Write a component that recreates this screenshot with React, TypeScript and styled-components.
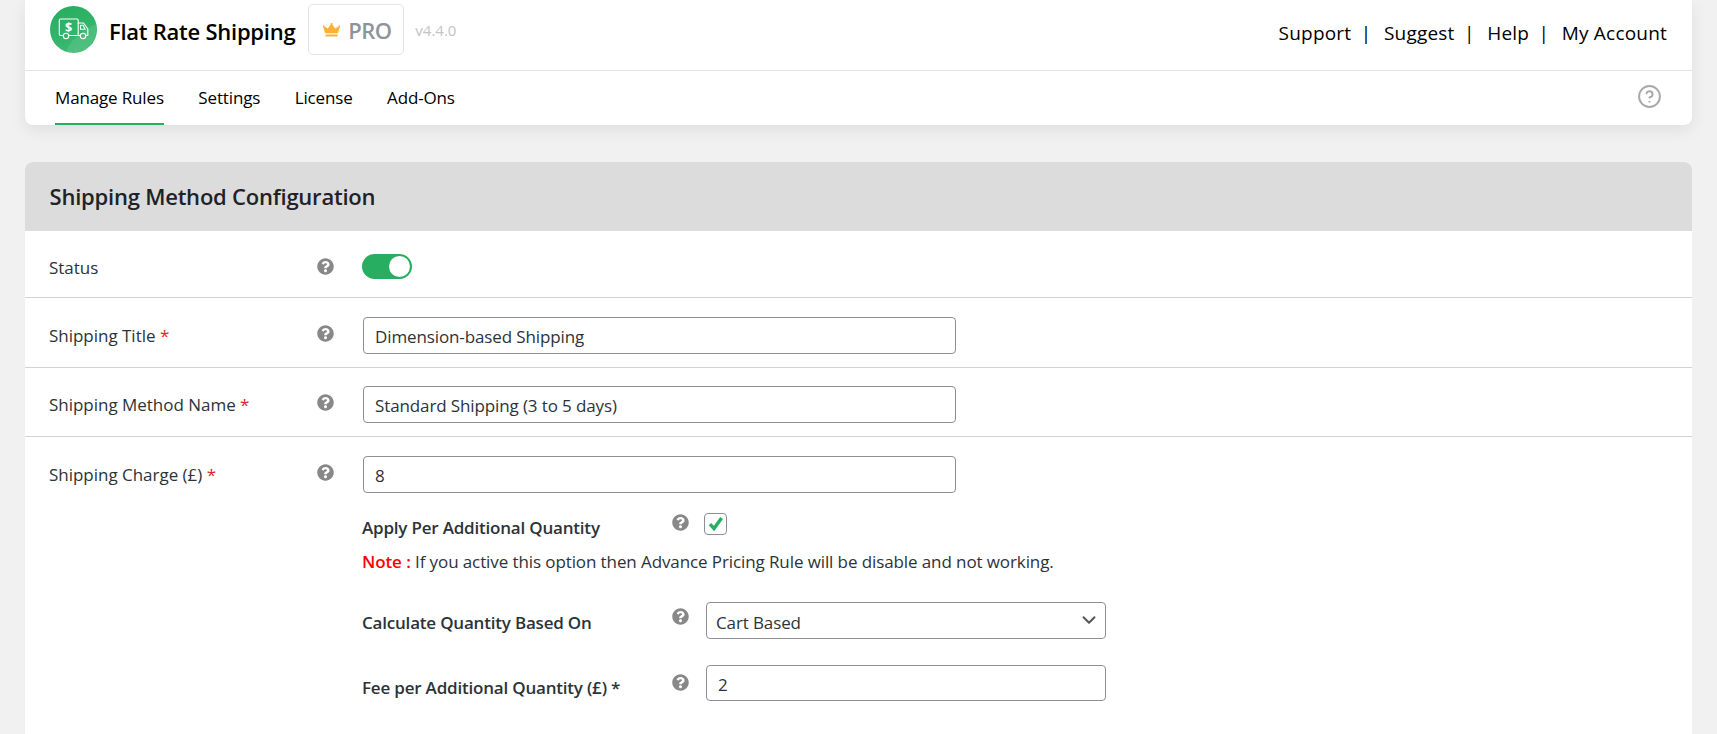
import React from "react";
import styled, { createGlobalStyle } from "styled-components";
import { FaQuestionCircle } from "react-icons/fa";
import { CircleHelp, ChevronDown } from "lucide-react";

const Global = createGlobalStyle`
  html, body { margin: 0; padding: 0; height: 100%; overflow: hidden; background: #f1f1f1; }
  body { font-family: "Open Sans", "Noto Sans", sans-serif; color: #2c3338; }
  * { box-sizing: border-box; }
`;

const Page = styled.div`
  padding: 0 25px;
  height: 734px;
  overflow: hidden;
`;

const HeaderCard = styled.header`
  background: #fff;
  border-radius: 0 0 8px 8px;
  box-shadow: 0 5px 16px rgba(0, 0, 0, 0.08);
  height: 125px;
`;

const TopBar = styled.div`
  display: flex;
  align-items: center;
  justify-content: space-between;
  height: 71px;
  padding: 0 25px;
  border-bottom: 1px solid #e4e4e4;
`;

const Brand = styled.div`
  display: flex;
  align-items: center;
  margin-top: -11px;
`;

const BrandName = styled.span`
  font-size: 22px;
  font-weight: 600;
  color: #000;
  margin: 2px 13px 0 12px;
  letter-spacing: -0.25px;
`;

const ProBadge = styled.div`
  display: flex;
  align-items: center;
  gap: 8px;
  width: 96px;
  height: 51px;
  padding-left: 14px;
  border: 1px solid #e5e5e5;
  border-radius: 5px;
`;

const ProText = styled.span`
  font-size: 22px;
  font-weight: 600;
  color: #8f939a;
  letter-spacing: -0.6px;
`;

const Version = styled.span`
  font-size: 15px;
  color: #c3c4c7;
  margin-left: 11px;
`;

const TopLinks = styled.nav`
  display: flex;
  align-items: center;
  margin-top: -4px;
  font-size: 19px;
  color: #000;
  letter-spacing: 0.2px;
`;

const TopLink = styled.a`
  color: #000;
`;

const Pipe = styled.span`
  margin: 0 12.5px 0 9.5px;
`;

const TabBar = styled.div`
  display: flex;
  align-items: stretch;
  justify-content: space-between;
  height: 54px;
  padding: 0 30px;
`;

const Tabs = styled.div`
  display: flex;
  gap: 34.5px;
`;

const Tab = styled.a<{ $active?: boolean }>`
  display: flex;
  align-items: center;
  font-size: 17px;
  color: #000;
  letter-spacing: -0.15px;
  padding-top: 1px;
  border-bottom: 2px solid ${(p) => (p.$active ? "#27ae60" : "transparent")};
`;

const TabHelp = styled.div`
  display: flex;
  align-items: center;
  color: #a9a9a9;
  padding-bottom: 3px;
`;

const ConfigCard = styled.section`
  margin-top: 37px;
  background: #fff;
  border-radius: 8px 8px 0 0;
  overflow: hidden;
`;

const CardTitle = styled.h2`
  margin: 0;
  height: 69px;
  padding: 0 25px 2px 24.5px;
  display: flex;
  align-items: center;
  background: #dcdcdc;
  font-size: 22px;
  font-weight: 600;
  color: #1d2327;
  letter-spacing: -0.22px;
`;

const Row = styled.div<{ $top: number; $height?: number }>`
  display: grid;
  grid-template-columns: 267px 46px 1fr;
  align-items: start;
  padding: ${(p) => p.$top}px 25px 0;
  ${(p) => (p.$height ? `height: ${p.$height}px;` : "")}
  & + & {
    border-top: 1px solid #d2d2d2;
  }
`;

const Label = styled.label<{ $offset?: number }>`
  font-size: 17px;
  line-height: 22px;
  color: #2c3338;
  letter-spacing: -0.02px;
  margin: ${(p) => p.$offset ?? 8}px 0 0 -1px;
`;

const Required = styled.span`
  color: #e8212b;
`;

const HelpSlot = styled.span<{ $offset?: number }>`
  display: block;
  height: 17px;
  color: #888;
  margin: ${(p) => p.$offset ?? 8}px 0 0 -0.5px;
  & > svg {
    display: block;
  }
`;

const Toggle = styled.span`
  display: block;
  position: relative;
  width: 50px;
  height: 25px;
  margin-left: -1px;
  border-radius: 13px;
  background: #27ae60;
  &::after {
    content: "";
    position: absolute;
    top: 2px;
    right: 2px;
    width: 21px;
    height: 21px;
    border-radius: 50%;
    background: #fff;
  }
`;

const TextInput = styled.input<{ $w?: number; $h?: number }>`
  display: block;
  width: ${(p) => p.$w ?? 593}px;
  height: ${(p) => p.$h ?? 37}px;
  padding: 2px 11px 0;
  border: 1px solid #8c8f94;
  border-radius: 4px;
  background: #fff;
  font: inherit;
  font-size: 17px;
  color: #2c3338;
  letter-spacing: -0.12px;
  outline: none;
`;

const Controls = styled.div`
  display: flex;
  flex-direction: column;
`;

const SubRow = styled.div<{ $top: number }>`
  display: grid;
  grid-template-columns: 310px 34px 1fr;
  align-items: start;
  margin: ${(p) => p.$top}px 0 0 -1px;
`;

const SubLabel = styled.label<{ $offset: number }>`
  font-size: 17px;
  line-height: 22px;
  font-weight: 600;
  color: #2c3338;
  letter-spacing: -0.2px;
  margin-top: ${(p) => p.$offset}px;
`;

const CheckBox = styled.span`
  display: flex;
  align-items: center;
  justify-content: center;
  width: 23px;
  height: 22px;
  margin-left: -2px;
  border: 1px solid #8c8f94;
  border-radius: 4px;
  & > svg {
    display: block;
  }
`;

const Note = styled.p`
  margin: 12px 0 0 -1px;
  font-size: 17px;
  line-height: 22px;
  color: #2c3338;
  letter-spacing: -0.1px;
`;

const NoteLead = styled.strong`
  color: #ff0000;
  font-weight: 600;
`;

const SelectBox = styled.div`
  position: relative;
  width: 400px;
  height: 37px;
`;

const Select = styled.select`
  appearance: none;
  display: block;
  width: 100%;
  height: 100%;
  padding: 3px 30px 0 9px;
  border: 1px solid #8c8f94;
  border-radius: 4px;
  background: #fff;
  font: inherit;
  font-size: 17px;
  color: #2c3338;
  letter-spacing: -0.12px;
  outline: none;
`;

const SelectArrow = styled.span`
  position: absolute;
  top: 7px;
  right: 6px;
  height: 22px;
  color: #50575e;
  pointer-events: none;
`;

const Logo = () => (
  <svg width="47" height="47" viewBox="0 0 47 47" fill="none" aria-hidden="true">
    <defs>
      <linearGradient id="lg" x1="0.3" y1="0" x2="0.7" y2="1">
        <stop offset="0" stopColor="#27ae60" />
        <stop offset="1" stopColor="#3dba74" />
      </linearGradient>
    </defs>
    <circle cx="23.5" cy="23.5" r="23.5" fill="url(#lg)" />
    <path d="M16 47 C18 36 30 26 46 18 C48 30 42 44 24 47 Z" fill="#fff" opacity="0.1" />
    <g stroke="#fff" strokeWidth="1.1" strokeLinejoin="round" strokeLinecap="round">
      <path d="M13 29.5 H10.5 A1.2 1.2 0 0 1 9.3 28.3 V14.2 A1.2 1.2 0 0 1 10.5 13 H27 A1.2 1.2 0 0 1 28.2 14.2 V29.5 H19" />
      <path d="M28.2 17 H33.5 L37.8 23 V29.5 H36" />
      <path d="M30.5 19.3 H33 L35.2 23.3 H30.5 Z" />
      <path d="M28.2 29.5 H30" />
      <circle cx="16" cy="30" r="2.7" />
      <circle cx="33" cy="30" r="2.7" />
    </g>
    <text x="18.7" y="25.6" textAnchor="middle" fontFamily="Open Sans, sans-serif" fontWeight="700" fontSize="12.5" fill="#fff">$</text>
  </svg>
);

const Crown = () => (
  <svg width="17" height="14" viewBox="0 0 17 14" aria-hidden="true">
    <path fill="#ffb136" d="M2.2 10.3 0.3 4.2 a1 1 0 1 1 1-.9 L4.7 5.6 7.6 1.7 a1.1 1.1 0 1 1 1.8 0 L12.3 5.6 15.7 3.3 a1 1 0 1 1 1 .9 L14.8 10.3 Z" />
    <rect x="2.4" y="11.6" width="12.2" height="2" rx="0.5" fill="#ffb136" />
  </svg>
);

const CheckMark = () => (
  <svg width="16" height="16" viewBox="0 0 16 16" fill="none" aria-hidden="true">
    <path d="M2 8.2 L6 12.5 L13.6 2" stroke="#27ae60" strokeWidth="3.4" />
  </svg>
);

const Help = ({ offset }: { offset?: number }) => (
  <HelpSlot $offset={offset}>
    <FaQuestionCircle size={17} />
  </HelpSlot>
);

export default function App() {
  return (
    <Page>
      <Global />
      <HeaderCard>
        <TopBar>
          <Brand>
            <Logo />
            <BrandName>Flat Rate Shipping</BrandName>
            <ProBadge>
              <Crown />
              <ProText>PRO</ProText>
            </ProBadge>
            <Version>v4.4.0</Version>
          </Brand>
          <TopLinks>
            <TopLink>Support</TopLink>
            <Pipe>|</Pipe>
            <TopLink>Suggest</TopLink>
            <Pipe>|</Pipe>
            <TopLink>Help</TopLink>
            <Pipe>|</Pipe>
            <TopLink>My Account</TopLink>
          </TopLinks>
        </TopBar>
        <TabBar>
          <Tabs>
            <Tab $active>Manage Rules</Tab>
            <Tab>Settings</Tab>
            <Tab>License</Tab>
            <Tab>Add-Ons</Tab>
          </Tabs>
          <TabHelp>
            <CircleHelp size={25} strokeWidth={1.9} />
          </TabHelp>
        </TabBar>
      </HeaderCard>

      <ConfigCard>
        <CardTitle>Shipping Method Configuration</CardTitle>
        <Row $top={23} $height={66}>
          <Label $offset={3}>Status</Label>
          <Help offset={4} />
          <Toggle />
        </Row>
        <Row $top={19} $height={70}>
          <Label>Shipping Title <Required>*</Required></Label>
          <Help />
          <TextInput defaultValue="Dimension-based Shipping" />
        </Row>
        <Row $top={18} $height={69}>
          <Label>Shipping Method Name <Required>*</Required></Label>
          <Help />
          <TextInput defaultValue="Standard Shipping (3 to 5 days)" />
        </Row>
        <Row $top={19} $height={300}>
          <Label>Shipping Charge (£) <Required>*</Required></Label>
          <Help />
          <Controls>
            <TextInput defaultValue="8" />
            <SubRow $top={20}>
              <SubLabel $offset={4}>Apply Per Additional Quantity</SubLabel>
              <Help offset={1} />
              <CheckBox>
                <CheckMark />
              </CheckBox>
            </SubRow>
            <Note>
              <NoteLead>Note :</NoteLead> If you active this option then Advance Pricing Rule will be disable and not working.
            </Note>
            <SubRow $top={29}>
              <SubLabel $offset={10}>Calculate Quantity Based On</SubLabel>
              <Help offset={6} />
              <SelectBox>
                <Select defaultValue="cart">
                  <option value="cart">Cart Based</option>
                </Select>
                <SelectArrow>
                  <ChevronDown size={22} strokeWidth={2.2} />
                </SelectArrow>
              </SelectBox>
            </SubRow>
            <SubRow $top={26}>
              <SubLabel $offset={12}>Fee per Additional Quantity (£) *</SubLabel>
              <Help offset={9} />
              <TextInput $w={400} $h={36} defaultValue="2" />
            </SubRow>
          </Controls>
        </Row>
      </ConfigCard>
    </Page>
  );
}
